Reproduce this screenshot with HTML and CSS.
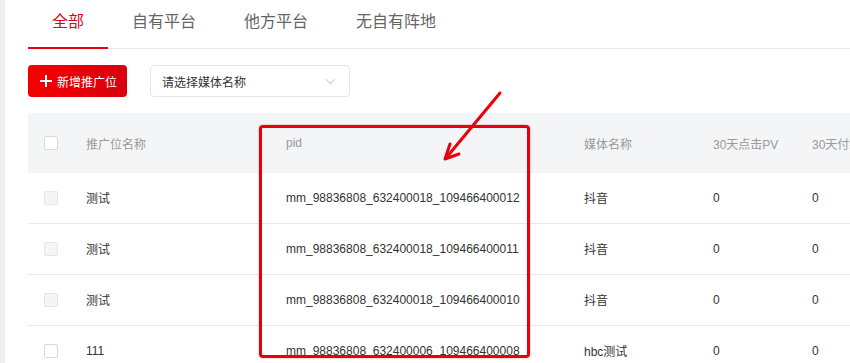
FILE: index.html
```html
<!DOCTYPE html>
<html lang="zh-CN">
<head>
  <meta charset="UTF-8">
  <meta name="viewport" content="width=device-width, initial-scale=1.0">
  <title>推广位管理</title>
  <link rel="stylesheet" href="styles.css">
</head>
<body>
  <main class="page">
    <nav class="tabs">
      <a class="tab active">全部</a>
      <a class="tab">自有平台</a>
      <a class="tab">他方平台</a>
      <a class="tab">无自有阵地</a>
    </nav>
    <div class="toolbar">
      <button class="btn-add"><span class="plus"></span>新增推广位</button>
      <div class="select">
        <span>请选择媒体名称</span>
        <span class="chevron"></span>
      </div>
    </div>
    <table class="grid">
      <thead>
        <tr>
          <th class="c-check"><span class="checkbox"></span></th>
          <th class="c-name">推广位名称</th>
          <th class="c-pid">pid</th>
          <th class="c-media">媒体名称</th>
          <th class="c-pv">30天点击PV</th>
          <th class="c-pay">30天付款金额</th>
        </tr>
      </thead>
      <tbody>
        <tr>
          <td><span class="checkbox disabled"></span></td>
          <td>测试</td>
          <td>mm_98836808_632400018_109466400012</td>
          <td>抖音</td>
          <td>0</td>
          <td>0</td>
        </tr>
        <tr>
          <td><span class="checkbox disabled"></span></td>
          <td>测试</td>
          <td>mm_98836808_632400018_109466400011</td>
          <td>抖音</td>
          <td>0</td>
          <td>0</td>
        </tr>
        <tr>
          <td><span class="checkbox disabled"></span></td>
          <td>测试</td>
          <td>mm_98836808_632400018_109466400010</td>
          <td>抖音</td>
          <td>0</td>
          <td>0</td>
        </tr>
        <tr>
          <td><span class="checkbox"></span></td>
          <td>111</td>
          <td>mm_98836808_632400006_109466400008</td>
          <td>hbc测试</td>
          <td>0</td>
          <td>0</td>
        </tr>
      </tbody>
    </table>
  </main>

  <!-- annotation drawn over the screenshot -->
  <div class="mark-box"></div>
  <svg class="mark-arrow" width="70" height="80" viewBox="0 0 70 80">
    <path d="M63 6 L9 71" />
    <path d="M13 57 L8 72 L22 67" />
  </svg>
</body>
</html>
```

FILE: styles.css
```css
* {
  box-sizing: border-box;
}
body {
  margin: 0;
  height: 100vh;
  overflow: hidden;
  background: #eef0f3;
  font-family: "Liberation Sans", "Noto Sans CJK SC", sans-serif;
  font-size: 12px;
  color: #333;
  position: relative;
}
.page {
  margin-left: 5px;
  min-height: 100vh;
  background: #fff;
  padding-left: 23px;
}
.tabs {
  display: flex;
  height: 49px;
  border-bottom: 1px solid #e8e8e8;
}
.tab {
  padding: 0 24px;
  font-size: 16px;
  line-height: 43px;
  color: #666;
  border-bottom: 2px solid transparent;
  margin-bottom: -1px;
}
.tab.active {
  color: #e60012;
  border-bottom-color: #e60012;
}
.toolbar {
  display: flex;
  gap: 23px;
  margin-top: 16px;
}
.btn-add {
  display: flex;
  align-items: center;
  gap: 5px;
  width: 99px;
  height: 32px;
  padding: 0 0 0 12px;
  border: 0;
  border-radius: 4px;
  background: linear-gradient(90deg, #f50000, #d80010);
  color: #fff;
  font-family: inherit;
  font-size: 12px;
  white-space: nowrap;
}
.plus {
  position: relative;
  flex: none;
  width: 12px;
  height: 12px;
}
.plus::before,
.plus::after {
  content: "";
  position: absolute;
  background: #fff;
}
.plus::before {
  left: 0;
  top: 5px;
  width: 12px;
  height: 2px;
}
.plus::after {
  left: 5px;
  top: 0;
  width: 2px;
  height: 12px;
}
.select {
  display: flex;
  align-items: center;
  justify-content: space-between;
  width: 200px;
  height: 32px;
  padding: 0 12px 0 11px;
  border: 1px solid #e5e5e5;
  border-radius: 4px;
  color: #333;
}
.chevron {
  width: 7px;
  height: 7px;
  border-right: 1px solid #d0d0d0;
  border-bottom: 1px solid #d0d0d0;
  transform: rotate(45deg);
  margin: -4px 3px 0 0;
}
.grid {
  margin-top: 16px;
  border-collapse: collapse;
  table-layout: fixed;
  width: 1000px;
}
.grid th,
.grid td {
  text-align: left;
  padding: 0 0 0 16px;
  white-space: nowrap;
  overflow: hidden;
}
.grid th {
  height: 60px;
  background: #f4f5f7;
  color: #999;
  font-weight: normal;
}
.grid td {
  height: 51px;
  border-bottom: 1px solid #e8e8e8;
  color: #333;
}
.grid tbody tr:first-child td {
  height: 50px;
}
.c-check { width: 42px; }
.c-name { width: 200px; }
.c-pid { width: 298px; }
.c-media { width: 129px; }
.c-pv { width: 99px; }
.checkbox {
  display: block;
  width: 14px;
  height: 14px;
  border: 1px solid #d9d9d9;
  border-radius: 2px;
  background: #fff;
}
.checkbox.disabled {
  background: #f5f5f5;
  border-color: #e6e6e6;
}
.mark-box {
  position: absolute;
  left: 259px;
  top: 125px;
  width: 271px;
  height: 233px;
  border: 3px solid #e8000b;
  border-radius: 4px;
  box-shadow: 0 0 2px rgba(120, 0, 0, 0.4);
}
.mark-arrow {
  position: absolute;
  left: 437px;
  top: 87px;
  fill: none;
  stroke: #e8000b;
  stroke-width: 3;
  stroke-linecap: round;
  stroke-linejoin: round;
}
```
